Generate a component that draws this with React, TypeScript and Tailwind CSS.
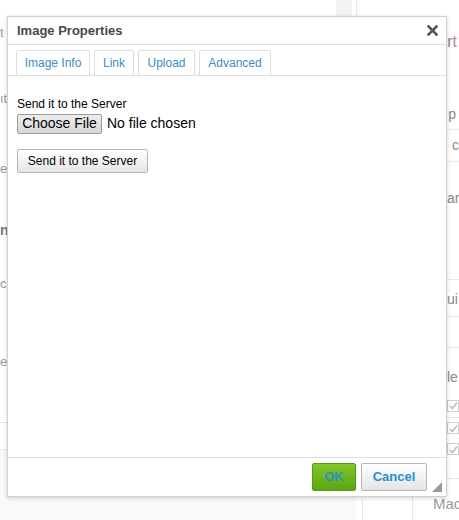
import React from "react";

const tabs = [
  { label: "Image Info", w: "w-[74px]" },
  { label: "Link", w: "w-[40px]" },
  { label: "Upload", w: "w-[57px]" },
  { label: "Advanced", w: "w-[72px]" },
];

function CloseIcon() {
  return (
    <svg width="11" height="11" viewBox="0 0 11 11">
      <path d="M1.5 1.5 L9.5 9.5 M9.5 1.5 L1.5 9.5" stroke="#555" strokeWidth="2.6" strokeLinecap="square" />
    </svg>
  );
}

function Check() {
  return (
    <div className="w-[12px] h-[12px] border border-[#cfcfcf] bg-white flex items-center justify-center">
      <svg width="9" height="9" viewBox="0 0 9 9">
        <path d="M1 5 L3.5 7.5 L8 1.5" stroke="#bdbdbd" strokeWidth="1.6" fill="none" />
      </svg>
    </div>
  );
}

function Dialog() {
  return (
    <div className="absolute left-[7px] top-[16px] w-[440px] h-[481px] bg-white border border-[#d1d1d1] shadow-[0_1px_4px_rgba(0,0,0,0.18)] flex flex-col">
      <div className="h-[28px] shrink-0 border-b border-[#dedede] flex items-center justify-between pl-[9px] pr-[8px]">
        <span className="text-[13px] font-bold text-[#484848]">Image Properties</span>
        <CloseIcon />
      </div>
      <div className="h-[31px] shrink-0 border-b border-[#dedede] flex items-end gap-[4px] pl-[8px]">
        {tabs.map((t) => (
          <div
            key={t.label}
            className={`${t.w} h-[26px] -mb-px border border-[#dedede] rounded-t-[2px] bg-white flex items-center justify-center text-[12px] text-[#3a8dc8]`}
          >
            {t.label}
          </div>
        ))}
      </div>
      <div className="flex-1 pl-[9px] pt-[21px] text-black">
        <div className="text-[12px] leading-[14px]">Send it to the Server</div>
        <div className="mt-[2px] flex items-center gap-[5px]">
          <div className="w-[85px] h-[20px] border border-[#9c9c9c] rounded-[2px] bg-gradient-to-b from-[#ededed] to-[#d8d8d8] flex items-center justify-center text-[14px]">
            Choose File
          </div>
          <span className="text-[14px]">No file chosen</span>
        </div>
        <div className="mt-[15px] w-[131px] h-[24px] border border-[#b6b6b6] rounded-[2px] bg-gradient-to-b from-white to-[#e6e6e6] flex items-center justify-center text-[12px]">
          Send it to the Server
        </div>
      </div>
      <div className="h-[39px] shrink-0 border-t border-[#dedede] flex items-center justify-end gap-[5px] pr-[19px] relative">
        <div className="w-[44px] h-[28px] rounded-[2px] border border-[#4f9c13] bg-gradient-to-b from-[#80c628] to-[#5ba514] flex items-center justify-center text-[13px] font-bold text-[#2a8fc9]">
          OK
        </div>
        <div className="w-[66px] h-[28px] rounded-[2px] border border-[#b6b6b6] bg-gradient-to-b from-white to-[#e4e4e4] flex items-center justify-center text-[13px] font-bold text-[#2a8fcd]">
          Cancel
        </div>
        <svg className="absolute right-[4px] bottom-[4px]" width="10" height="10" viewBox="0 0 10 10">
          <path d="M10 0 L10 10 L0 10 Z" fill="#9a9a9a" />
        </svg>
      </div>
    </div>
  );
}

export default function App() {
  return (
    <div
      className="relative w-[459px] h-[520px] overflow-hidden bg-white"
      style={{ fontFamily: '"Liberation Sans", Arial, sans-serif' }}
    >
      <div className="flex h-full">
        {/* page behind the dialog */}
        <div className="w-[356px] shrink-0 flex flex-col text-[13px] text-[#9a9a9a]">
          <div className="h-[16px] shrink-0 flex justify-end pr-[4px]">
            <div className="w-[16px] bg-[#f3f3f3]" />
          </div>
          <div className="h-[26px] shrink-0 flex items-end">t -</div>
          <div className="h-[66px] shrink-0 flex items-end">ıt</div>
          <div className="h-[70px] shrink-0 flex items-end">e</div>
          <div className="h-[63px] shrink-0 flex items-end font-bold text-[#777] text-[14px]">n</div>
          <div className="h-[52px] shrink-0 flex items-end">c</div>
          <div className="h-[78px] shrink-0 flex items-end">e</div>
          <div className="h-[52px] shrink-0 border-b border-[#e6e6e6]" />
          <div className="h-[26px] shrink-0" />
          <div className="flex-1 bg-[#f9f9f9] border-t border-[#eeeeee]" />
        </div>
        <div className="w-[103px] shrink-0 flex flex-col text-[#888] overflow-hidden">
          <div className="h-[16px] shrink-0 border-l border-[#e6e6e6]" />
          <div className="h-[8px] shrink-0" />
          <div className="h-[36px] shrink-0 flex items-center justify-end pr-[2px] text-[16px] whitespace-nowrap">
            <span>Sta</span>
            <span>r</span>
            <span className="text-[#c98080]">t</span>
          </div>
          <div className="h-[70px] shrink-0 flex items-end justify-end pr-[3px] pb-[4px] text-[14px] border-b border-[#ececec]">
            Set<span className="text-white">u</span>p
          </div>
          <div className="h-[32px] shrink-0 flex items-center pl-[96px] text-[14px] border-b border-[#ececec] whitespace-nowrap">ca</div>
          <div className="h-[118px] shrink-0 flex items-start pt-[26px] pl-[91px] text-[14px] border-b border-[#ececec] whitespace-nowrap">ar</div>
          <div className="h-[37px] shrink-0 flex items-end pb-[6px] pl-[91px] text-[14px] border-b border-[#ececec] whitespace-nowrap">ui</div>
          <div className="h-[31px] shrink-0 border-b border-[#ececec]" />
          <div className="h-[46px] shrink-0 flex items-end pb-[6px] pl-[91px] text-[14px] whitespace-nowrap">le</div>
          <div className="h-[24px] shrink-0 flex items-center pl-[91px] border-b border-dotted border-[#d8d8d8]">
            <Check />
          </div>
          <div className="h-[20px] shrink-0 flex items-center pl-[91px]">
            <Check />
          </div>
          <div className="h-[22px] shrink-0 flex items-center pl-[91px]">
            <Check />
          </div>
          <div className="h-[18px] shrink-0" />
          <div className="flex-1 flex">
            <div className="w-[6px] shrink-0" />
            <div className="w-[50px] shrink-0 flex flex-col">
              <div className="h-[20px] shrink-0" />
              <div className="flex-1 border-l border-[#e6e6e6]" />
            </div>
            <div className="flex-1 border-l border-t border-[#e6e6e6] pt-[14px] pl-[20px] text-[15px] text-[#999]">
              Mac
            </div>
          </div>
        </div>
      </div>
      <Dialog />
    </div>
  );
}
